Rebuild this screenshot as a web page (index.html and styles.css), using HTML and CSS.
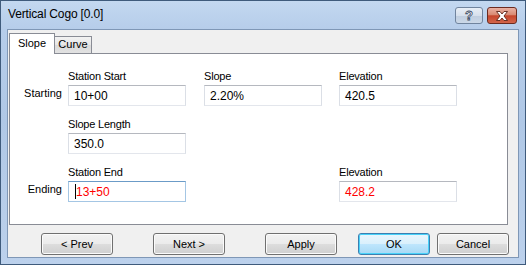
FILE: index.html
```html
<!DOCTYPE html>
<html>
<head>
<meta charset="utf-8">
<link rel="stylesheet" href="styles.css">
</head>
<body>
<div class="window">
  <div class="titlebar">
    <span class="title">Vertical Cogo [0.0]</span>
    <div class="caption">
      <span class="cap cap-help">?</span>
      <span class="cap cap-close">
        <svg width="14" height="10" viewBox="0 0 14 10"><path d="M1.5 0.5 H5 L7 3 L9 0.5 H12.5 L9 5 L12.5 9.5 H9 L7 7 L5 9.5 H1.5 L5 5 Z" fill="#fff" stroke="#5b2418" stroke-width="0.9" stroke-linejoin="round"/></svg>
      </span>
    </div>
  </div>
  <div class="client">
    <div class="tabs">
      <div class="tab tab-active">Slope</div>
      <div class="tab">Curve</div>
    </div>
    <div class="page">
      <div class="form">
        <div class="side">Starting</div>
        <div class="field"><span class="label">Station Start</span><div class="input">10+00</div></div>
        <div class="field"><span class="label">Slope</span><div class="input">2.20%</div></div>
        <div class="field"><span class="label">Elevation</span><div class="input">420.5</div></div>

        <div class="side"></div>
        <div class="field"><span class="label">Slope Length</span><div class="input">350.0</div></div>
        <div></div>
        <div></div>

        <div class="side">Ending</div>
        <div class="field"><span class="label">Station End</span><div class="input input-focus input-red"><span class="caret"></span>13+50</div></div>
        <div></div>
        <div class="field"><span class="label">Elevation</span><div class="input input-red">428.2</div></div>
      </div>
    </div>
    <div class="buttons">
      <div class="btn">&lt; Prev</div>
      <div class="btn btn-gap">Next &gt;</div>
      <div class="btn btn-gap">Apply</div>
      <div class="btn btn-default btn-gap-ok">OK</div>
      <div class="btn btn-gap-cancel">Cancel</div>
    </div>
  </div>
</div>
</body>
</html>
```
FILE: styles.css
```css
* { box-sizing: border-box; }
html, body { margin: 0; padding: 0; }
body {
  width: 526px;
  height: 265px;
  overflow: hidden;
  font-family: "Liberation Sans", Arial, sans-serif;
  font-size: 11px;
  color: #000;
}
.window {
  width: 526px;
  height: 265px;
  border: 1px solid #3f5b7c;
  background: linear-gradient(#c3d8f0, #b6cdea 28px, #b0c8e6 120px, #bcd1ec);
  padding: 0 6px 6px 6px;
  display: flex;
  flex-direction: column;
}
.titlebar {
  height: 28px;
  display: flex;
  justify-content: space-between;
  align-items: flex-start;
}
.title {
  padding-left: 1px;
  margin-top: 6px;
  font-size: 12px;
  line-height: 15px;
  letter-spacing: -0.15px;
  color: #000;
}
.caption {
  display: flex;
  gap: 4px;
  margin-top: 6px;
  margin-right: 2px;
}
.cap {
  height: 17px;
  border-radius: 3px;
  display: flex;
  align-items: center;
  justify-content: center;
}
.cap-help {
  width: 28px;
  border: 1px solid #70849e;
  background: linear-gradient(#e8eef6, #d6e0ec 50%, #bfcddf 51%, #cbd8e8);
  color: #fff;
  font-weight: bold;
  font-size: 13px;
  line-height: 15px;
  -webkit-text-stroke: 0.8px #3a4a62;
}
.cap-close {
  width: 30px;
  border: 1px solid #6c2b20;
  background: linear-gradient(#eab1a3, #d98a73 45%, #c6452c 52%, #d2654a);
}
.client {
  flex: 1;
  background: #f0f0f0;
  border: 1px solid #7f97b6;
  padding: 3px 10px 0 1px;
  display: flex;
  flex-direction: column;
}
.tabs {
  display: flex;
  align-items: flex-end;
  height: 20px;
  position: relative;
  z-index: 1;
}
.tab {
  height: 17px;
  width: 37px;
  border: 1px solid #898c95;
  border-left: 0;
  border-bottom: 0;
  background: linear-gradient(#f3f3f3, #e6e6e6 50%, #dadada 51%, #e2e2e2);
  text-align: center;
  line-height: 15px;
}
.tab-active {
  height: 21px;
  width: 46px;
  margin-bottom: -1px;
  border-left: 1px solid #898c95;
  background: #fff;
  line-height: 19px;
  padding-bottom: 2px;
}
.page {
  height: 172px;
  border: 1px solid #898c95;
  background: #fff;
}
.form {
  display: grid;
  grid-template-columns: 58px 136px 135px 118px;
  row-gap: 12px;
  padding-top: 16px;
}
.side {
  align-self: end;
  text-align: right;
  padding: 0 6px 6px 0;
  line-height: 13px;
}
.field {
  display: flex;
  flex-direction: column;
}
.label {
  line-height: 13px;
  margin-bottom: 2px;
  letter-spacing: -0.2px;
}
.input {
  width: 118px;
  height: 21px;
  border: 1px solid #dbdfe6;
  border-top-color: #b5b8bf;
  border-bottom-color: #e3e6ec;
  background: #fff;
  padding: 3px 5px 0 5px;
  font-size: 12px;
  line-height: 14px;
  display: flex;
  align-items: flex-start;
}
.input-focus {
  border-color: #a4c6e4;
  border-top-color: #6b9bc7;
}
.input-red { color: #ff0000; }
.caret {
  width: 1px;
  height: 15px;
  background: #000;
  margin: -1px 0 0 1px;
}
.buttons {
  display: flex;
  margin-top: 8px;
  padding-left: 32px;
}
.btn {
  flex-shrink: 0;
  width: 72px;
  height: 22px;
  border: 1px solid #707070;
  border-radius: 3px;
  background: linear-gradient(#f2f2f2, #ebebeb 50%, #dddddd 51%, #cfcfcf);
  box-shadow: inset 0 0 0 1px #fbfbfb;
  text-align: center;
  line-height: 20px;
  font-size: 11px;
}
.btn-gap { margin-left: 40px; }
.btn-gap-ok { margin-left: 21px; }
.btn-gap-cancel { margin-left: 7px; }
.btn-default {
  border-color: #3c7fb1;
  background: linear-gradient(#eaf6fd, #d9f0fc 50%, #bee6fd 51%, #a7d9f5);
  box-shadow: inset 0 0 0 1px #48d2f9;
}
```
